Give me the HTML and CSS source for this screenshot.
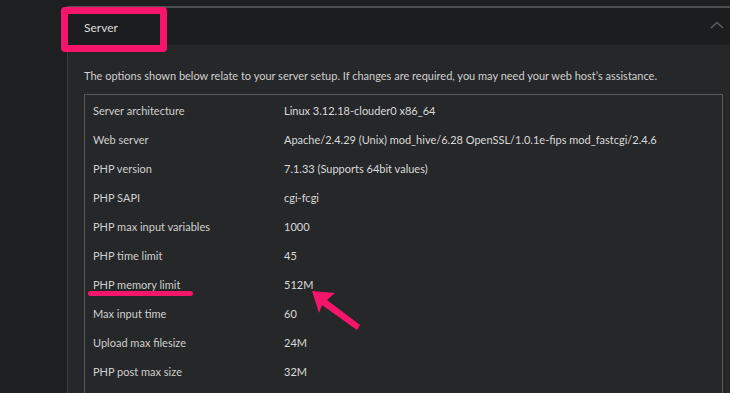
FILE: index.html
```html
<!DOCTYPE html>
<html lang="en">
<head>
    <meta charset="UTF-8" />
    <title>Server - Health</title>
    <link rel="stylesheet" href="styles.css">
</head>
<body>

<div class="page">
    <aside class="side"></aside>

    <main class="main">
        <section class="panel">
            <header class="panel-head">
                <span class="panel-title">Server</span>
                <svg class="chevron" width="14" height="8" viewBox="0 0 14 8">
                    <polyline points="1,7 7,1.5 13,7" fill="none" stroke="#5c5f61" stroke-width="1.6"/>
                </svg>
            </header>

            <div class="panel-body">
                <p class="intro">The options shown below relate to your server setup. If changes are required, you may need your web host&rsquo;s assistance.</p>

                <table class="info">
                    <tbody>
                        <tr><td>Server architecture</td><td>Linux 3.12.18-clouder0 x86_64</td></tr>
                        <tr><td>Web server</td><td>Apache/2.4.29 (Unix) mod_hive/6.28 OpenSSL/1.0.1e-fips mod_fastcgi/2.4.6</td></tr>
                        <tr><td>PHP version</td><td>7.1.33 (Supports 64bit values)</td></tr>
                        <tr><td>PHP SAPI</td><td>cgi-fcgi</td></tr>
                        <tr><td>PHP max input variables</td><td>1000</td></tr>
                        <tr><td>PHP time limit</td><td>45</td></tr>
                        <tr><td>PHP memory limit</td><td>512M</td></tr>
                        <tr><td>Max input time</td><td>60</td></tr>
                        <tr><td>Upload max filesize</td><td>24M</td></tr>
                        <tr><td>PHP post max size</td><td>32M</td></tr>
                        <tr><td>&nbsp;</td><td></td></tr>
                    </tbody>
                </table>
            </div>
        </section>
    </main>

    <!-- annotations drawn over the screenshot -->
    <div class="mark-box"></div>
    <div class="mark-line"></div>
    <svg class="mark-arrow" width="730" height="393" viewBox="0 0 730 393">
        <polygon points="312,291 335,293 327,300 360,325 357,330 322,305 319,313" fill="#f5166b"/>
    </svg>
</div>

</body>
</html>
```

FILE: styles.css
```css
body {
    margin: 0;
    background: #1e1f20;
    font-family: Lato, 'Noto Sans', sans-serif;
    color: #d6d6d6;
    overflow: hidden;
}

.page {
    position: relative;
    display: flex;
    height: 393px;
    overflow: hidden;
}

.side {
    width: 67px;
    flex-shrink: 0;
    background: #1e1f20;
}

.main {
    flex: 1;
    padding-top: 6px;
}

.panel {
    border-top: 2px solid #4b4d4f;
    border-left: 1px solid #3a3c3e;
    background: #262728;
    height: 100%;
}

.panel-head {
    display: flex;
    justify-content: space-between;
    align-items: center;
    height: 37px;
    padding: 0 6px 0 16px;
    background: #1b1d1e;
}

.panel-title {
    font-size: 12px;
    color: #dcdcdc;
    margin-top: 2px;
}

.chevron {
    margin-top: -3px;
}

.panel-body {
    padding: 24px 7px 0 16px;
}

.intro {
    margin: 0 0 12px;
    font-size: 11px;
    color: #d0d0d0;
}

.info {
    width: 100%;
    border: 1px solid #56585a;
    border-collapse: collapse;
    font-size: 11px;
}

.info td {
    height: 28px;
    padding: 1px 8px 0;
    vertical-align: middle;
    color: #cfcfcf;
}

.info td:first-child {
    width: 175px;
}

.info td + td {
    padding-left: 8px;
    color: #dadada;
}

.mark-box {
    position: absolute;
    left: 61px;
    top: 7px;
    width: 92px;
    height: 31px;
    border: 7px solid #f5166b;
    border-radius: 4px;
}

.mark-line {
    position: absolute;
    left: 88px;
    top: 291px;
    width: 105px;
    height: 5px;
    border-radius: 3px;
    background: #f5166b;
}

.mark-arrow {
    position: absolute;
    left: 0;
    top: 0;
    pointer-events: none;
}
```
